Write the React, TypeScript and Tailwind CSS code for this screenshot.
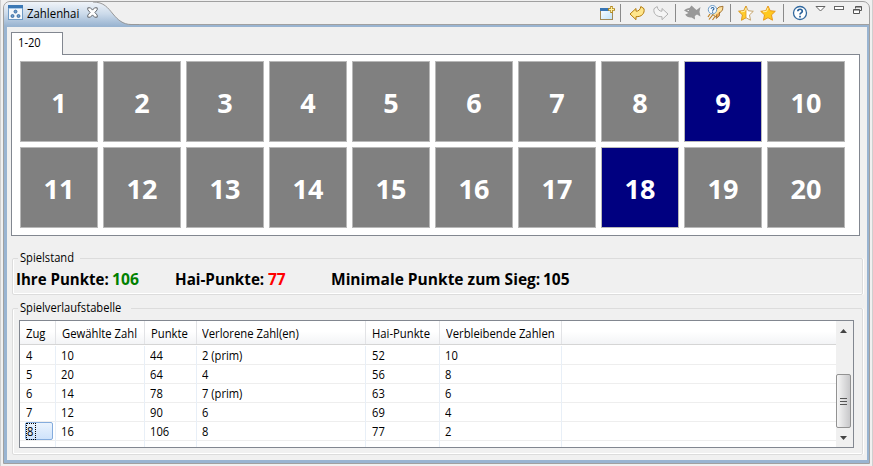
import type { ReactNode } from 'react';

const numbers = Array.from({ length: 20 }, (_, i) => i + 1);
const highlighted = [9, 18];

const headers = ['Zug', 'Gewählte Zahl', 'Punkte', 'Verlorene Zahl(en)', 'Hai-Punkte', 'Verbleibende Zahlen', ''];
const rows = [
  ['4', '10', '44', '2 (prim)', '52', '10', ''],
  ['5', '20', '64', '4', '56', '8', ''],
  ['6', '14', '78', '7 (prim)', '63', '6', ''],
  ['7', '12', '90', '6', '69', '4', ''],
  ['8', '16', '106', '8', '77', '2', ''],
];
const columns = 'grid grid-cols-[36px_89px_52px_169px_74px_122px_1fr]';

function Label({ children, scale = 'scale-x-[0.93]' }: { children: ReactNode; scale?: string }) {
  return <span className={`inline-block origin-left whitespace-pre ${scale}`}>{children}</span>;
}

function AppIcon() {
  return (
    <svg width="15" height="15" viewBox="0 0 15 15" className="ml-[4px] mt-[3px] shrink-0">
      <rect x=".5" y=".5" width="14" height="14" fill="#f4f8fc" stroke="#6f9ac4" />
      <path d="M0 0h15v3H0z" fill="#3b78b5" />
      <path d="M1 3h13v1H1z" fill="#a9c9e8" />
      <g fill="#6b9ccd" stroke="#2c6197" strokeWidth=".8">
        <circle cx="7.5" cy="6.6" r="1.5" />
        <circle cx="4.5" cy="11" r="1.5" />
        <circle cx="10.5" cy="11" r="1.5" />
      </g>
    </svg>
  );
}

function CloseIcon() {
  return (
    <svg width="11" height="11" viewBox="0 0 11 11" className="ml-[8px] mt-[5px] shrink-0">
      <path d="M.8.8h2.6l2.1 2.3L7.6.8h2.6v2L7.9 5.5l2.3 2.6v2.1H7.6L5.5 7.9 3.4 10.2H.8V8.100L3.1 5.500.8 2.800z" fill="#fff" stroke="#565a60" strokeWidth=".9" />
    </svg>
  );
}

function Separator({ className }: { className: string }) {
  return <span className={`h-[18px] w-px shrink-0 bg-[#8a8a8a] ${className}`} />;
}

function Toolbar() {
  return (
    <div className="ml-auto mt-[2px] flex h-[18px] items-start">
      <svg width="16" height="16" viewBox="0 0 16 16" className="mt-px">
        <defs>
          <linearGradient id="win" x2="1" y2="1">
            <stop offset="0" stopColor="#fff" />
            <stop offset="1" stopColor="#bfe3fa" />
          </linearGradient>
        </defs>
        <rect x="1.500" y="3.500" width="12" height="11" fill="url(#win)" stroke="#a18a57" />
        <path d="M1 3h9v3H1z" fill="#3875b4" />
        <path d="M12.500 1v7M9 4.500h7" stroke="#b48a20" strokeWidth="2.600" />
        <path d="M12.500 2v5M10 4.500h5" stroke="#fff1a5" strokeWidth="1.200" />
      </svg>
      <Separator className="ml-[5px]" />
      <svg width="17" height="16" viewBox="0 0 17 16" className="ml-[8px] mt-px">
        <path d="M1 9 7 3.500v2.700c2.500.2 4.500-1.700 4.800-4.700l3.200 2.200c1 4.800-2.500 8.300-8 8v3z" fill="#ffe68c" stroke="#b37b0c" strokeLinejoin="round" />
      </svg>
      <svg width="17" height="16" viewBox="0 0 17 16" className="ml-[6px] mt-px">
        <path d="M16 9 10 3.500v2.700c-2.500.2-4.500-1.700-4.800-4.700L2 3.700c-1 4.800 2.500 8.300 8 8v3z" fill="#f5f5f5" stroke="#b0b0b0" strokeLinejoin="round" />
      </svg>
      <Separator className="ml-[6px]" />
      <svg width="17" height="15" viewBox="0 0 17 15" className="ml-[8px] mt-px">
        <path d="M0 5.500C1.500 4 3.500 3 5.500 3L7.500.5l3 2.800 2 1.700L16.500 2l-1 4.800 1 4.700-3.500-2-2.200 1.500.2 3.500-3.500-2C4.500 12.800 2.500 11.500 1.200 9.500L4.500 8z" fill="#999" />
        <path d="M3.500 5H5v1H3.500z" fill="#eee" />
      </svg>
      <svg width="17" height="17" viewBox="0 0 17 17" className="ml-[6px]">
        <path d="m5 10 7-7 4-.7-.5 3.700L9 13z" fill="#ffe2a0" stroke="#9c6b28" strokeWidth=".9" />
        <path d="m6 10.500-4 5M3 10l-2 3M8 12.500 5.500 16" stroke="#bd8024" strokeWidth="1.200" />
        <path d="m9.500 10.500-.2 4 3.200-2.800V8" fill="#e8a24a" stroke="#99672d" strokeWidth=".8" />
        <circle cx="5.500" cy="5.700" r="4.200" fill="#f5faff" stroke="#6d9dc9" />
        <path d="M4.200 4.800c0-1.700 2.800-1.700 2.800 0 0 1-1.400 1-1.400 2M5.600 7.500v1.200" fill="none" stroke="#245f9b" strokeWidth="1.100" />
      </svg>
      <Separator className="ml-[6px]" />
      <svg width="16" height="17" viewBox="0 0 16 17" className="ml-[7px] mr-px mt-px">
        <path d="m8 1 2.200 4.700 5.100.6-3.800 3.600 1 5.300L8 12.700l-4.500 2.500 1-5.300L.7 6.300l5.100-.6z" fill="#fff" stroke="#c4a36b" />
        <path d="M8 1v11.700l-4.500 2.500 1-5.300L.7 6.300l5.100-.6z" fill="#ffcc2b" stroke="#e39d1e" strokeWidth=".8" />
        <path d="m8 3-1.400 3.400L3 6.800" fill="none" stroke="#fff0a3" />
      </svg>
      <svg width="16" height="17" viewBox="0 0 16 17" className="ml-[5px] mr-px mt-px">
        <path d="m8 1 2.200 4.700 5.100.6-3.800 3.600 1 5.300L8 12.700l-4.500 2.500 1-5.300L.7 6.300l5.100-.6z" fill="#ffc91f" stroke="#e9981c" />
        <path d="m8 3-1.400 3.400L3 6.800" fill="none" stroke="#fff0a3" />
      </svg>
      <Separator className="ml-[6px]" />
      <svg width="16" height="16" viewBox="0 0 16 16" className="ml-[8px] mt-px">
        <circle cx="8" cy="8" r="6.500" fill="#fff" stroke="#32699f" strokeWidth="1.300" />
        <path d="M5.800 6.300c0-2.800 4.500-2.700 4.500 0C10.300 8 8 7.800 8 9.500M8 10.700v1.700" fill="none" stroke="#286099" strokeWidth="1.700" />
      </svg>
      <svg width="11" height="7" viewBox="0 0 11 7" className="ml-[7px] mt-[2px]">
        <path d="M1 .5h9l-4.500 4.500z" fill="#fff" stroke="#636363" />
      </svg>
      <svg width="11" height="5" viewBox="0 0 11 5" className="ml-[8px] mt-[2px]">
        <rect x=".5" y=".5" width="9" height="3" fill="#fff" stroke="#636363" />
      </svg>
      <svg width="9" height="9" viewBox="0 0 9 9" className="ml-[8px] mr-[7px] mt-[2px]">
        <path d="M2.500 2.500v-2h6v4h-2M2.500 1h6" fill="none" stroke="#555" />
        <path d="M.5 3.500h6v4h-6zM.5 4h6" fill="#fff" stroke="#555" />
      </svg>
    </div>
  );
}

function TitleBar() {
  return (
    <div className="relative flex h-[23px] shrink-0">
      <svg width="135" height="24" viewBox="0 0 135 24" className="absolute left-0 top-0">
        <defs>
          <linearGradient id="tab" x2="0" y2="1">
            <stop offset="0" stopColor="#f0f4f9" />
            <stop offset=".5" stopColor="#cbdaea" />
            <stop offset="1" stopColor="#99b4d1" />
          </linearGradient>
        </defs>
        <path d="M0 24V6Q0 0 6 0H89C100 0 104 6 109 12S120 22 127 22.500H135V24z" fill="url(#tab)" />
        <path d="M89 0C100 0 104 6 109 12S119 22.500 127 22.500H135" fill="none" stroke="#999" />
      </svg>
      <div className="relative flex h-[22px] w-[125px] items-start">
        <AppIcon />
        <div className="ml-[4px] mt-[3px] w-[52px] text-[12px] leading-[18px]"><Label scale="scale-x-[0.95]">Zahlenhai</Label></div>
        <CloseIcon />
      </div>
      <div className="flex h-[23px] flex-1 border-b border-[#a0a0a0]"><Toolbar /></div>
    </div>
  );
}

function Board() {
  return (
    <div className="mt-[5px] ml-[4px] w-[849px]">
      <div className="relative z-10 h-[23px] w-[52px] border border-b-0 border-[#828790] bg-white pl-[6px] pt-px text-[12px] leading-[18px]">
        <Label>1-20</Label>
      </div>
      <div className="-mt-px grid h-[182px] grid-cols-[repeat(10,78px)] grid-rows-[repeat(2,81px)] gap-[5px] border border-[#828790] bg-white pt-[6px] pl-[8px]">
        {numbers.map((n) => (
          <div
            key={n}
            className={`flex items-center justify-center border border-[#b8b8b8] pt-[4px] text-[27px] font-bold text-white ${highlighted.includes(n) ? 'bg-[#000080]' : 'bg-[#808080]'}`}
          >
            {n}
          </div>
        ))}
      </div>
    </div>
  );
}

function Group({ title, className, children }: { title: string; className: string; children: ReactNode }) {
  return (
    <fieldset className={`ml-[5px] w-[851px] rounded-[2px] border border-[#dcdcdc] shadow-[inset_1px_0_white,inset_0_-1px_white,1px_0_white] ${className}`}>
      <legend className="ml-[5px] h-[18px] px-[2px] text-[12px] leading-[18px]">
        <Label>{title}</Label>
      </legend>
      {children}
    </fieldset>
  );
}

function Score() {
  return (
    <div className="flex text-[16px] font-bold leading-[24px]">
      <div className="ml-[3px] w-[96px] whitespace-nowrap"><Label scale="scale-x-[0.94]">Ihre Punkte:</Label></div>
      <div className="w-[63px] text-[#008000]"><Label scale="scale-x-[0.98]">106</Label></div>
      <div className="w-[93px] whitespace-nowrap"><Label scale="scale-x-[0.95]">Hai-Punkte:</Label></div>
      <div className="w-[63px] text-[#ff0000]"><Label scale="scale-x-[0.97]">77</Label></div>
      <div className="w-[212px] whitespace-nowrap"><Label scale="scale-x-[0.97]">Minimale Punkte zum Sieg:</Label></div>
      <div><Label scale="scale-x-[0.97]">105</Label></div>
    </div>
  );
}

function ScrollBar() {
  return (
    <div className="flex w-[17px] shrink-0 flex-col items-center bg-[#f0f0f0] pr-[2px]">
      <svg width="7" height="4" viewBox="0 0 7 4" className="mt-[8px]"><path d="M3.500 0 7 4H0z" fill="#444" /></svg>
      <div className="mt-[41px] flex h-[54px] w-[15px] flex-col items-center justify-center gap-[2px] rounded-[2px] border border-[#929292] bg-gradient-to-r from-[#f6f6f6] to-[#c8c8ca]">
        <span className="h-px w-[7px] bg-[#555]" />
        <span className="h-px w-[7px] bg-[#555]" />
        <span className="h-px w-[7px] bg-[#555]" />
      </div>
      <svg width="7" height="4" viewBox="0 0 7 4" className="mt-[8px]"><path d="M0 0h7L3.500 4z" fill="#444" /></svg>
    </div>
  );
}

function HistoryTable() {
  return (
    <div className="ml-[6px] mt-[3px] flex h-[128px] w-[835px] border border-[#828790] bg-white text-[12px]">
      <div className="flex min-w-0 flex-1 flex-col">
        <div className={`${columns} h-[24px] border-b border-[#d5d5d5] bg-gradient-to-b from-white from-45% to-[#f3f4f6]`}>
          {headers.map((h, i) => (
            <div key={i} className={`border-r border-[#e2e3e6] pt-[4px] leading-[18px] last:border-r-0 ${i === 3 ? 'pl-[5px]' : 'pl-[6px]'}`}><Label scale="scale-x-[0.94]">{h}</Label></div>
          ))}
        </div>
        {rows.map((row, r) => (
          <div key={r} className={`${columns} h-[19px] border-b border-[#eeeeee] ${r === 0 ? 'mt-px' : ''}`}>
            {row.map((cell, c) => (
              <div key={c} className={`flex border-r border-[#e8eff7] leading-[20px] last:border-r-0 ${(c > 0 && c < 4) || c === 5 ? 'pl-[5px]' : 'pl-[6px]'}`}>
                {r === 4 && c === 0 ? (
                  <div className="-ml-px h-[18px] w-[28px] rounded-[2px] border border-[#84acdd] bg-gradient-to-b from-[#eaf3fd] to-[#cfe3fb]">
                    <div className="h-[17px] w-[10px] border border-dotted border-black leading-[16px]"><Label>{cell}</Label></div>
                  </div>
                ) : (
                  <Label>{cell}</Label>
                )}
              </div>
            ))}
          </div>
        ))}
        <div className={`${columns} flex-1`}>
          {headers.map((_, i) => <div key={i} className="border-r border-[#e8eff7] last:border-r-0" />)}
        </div>
      </div>
      <ScrollBar />
    </div>
  );
}

export default function App() {
  return (
    <div className="flex h-[466px] w-[873px] overflow-hidden bg-[#f0f0f0] font-['Open_Sans','Noto_Sans',sans-serif] text-black">
      <div className="mr-[2px] w-px bg-[#cfcfcf]" />
      <div className="mt-px flex h-[463px] w-[867px] flex-col overflow-hidden rounded-t-[7px] border border-[#a0a0a0]">
        <TitleBar />
        <div className="flex-1 border-[3px] border-t-2 border-r-2 border-[#99b4d1]">
          <Board />
          <Group title="Spielstand" className="mt-[13px] h-[46px]"><Score /></Group>
          <Group title="Spielverlaufstabelle" className="mt-[4px] h-[156px]"><HistoryTable /></Group>
        </div>
      </div>
      <div className="ml-[2px] w-px bg-[#cfcfcf]" />
    </div>
  );
}
